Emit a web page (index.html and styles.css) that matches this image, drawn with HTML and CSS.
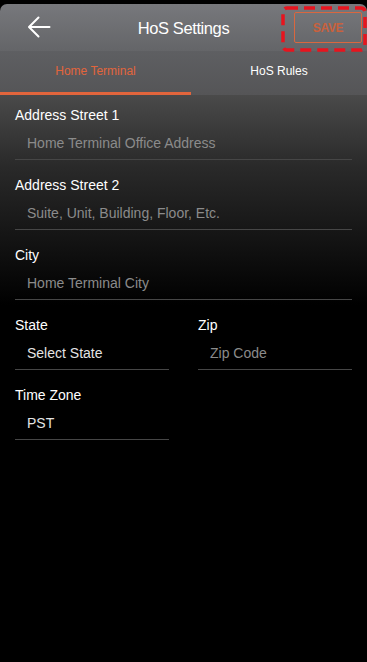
FILE: index.html
```html
<!DOCTYPE html>
<html>
<head>
<meta charset="utf-8">
<link rel="stylesheet" href="styles.css">
</head>
<body>
<div class="screen">
  <div class="top">
    <div class="navbar">
      <div class="back">
        <svg width="24" height="22" viewBox="0 0 24 22"><path d="M22.5 11H2.5M11.5 1.5L2 11l9.5 9.5" fill="none" stroke="#fff" stroke-width="2" stroke-linecap="round" stroke-linejoin="round"/></svg>
      </div>
      <div class="title">HoS Settings</div>
      <div class="save-wrap">
        <div class="save">SAVE</div>
        <svg class="highlight" width="86" height="46" viewBox="0 0 86 46"><rect x="2" y="2" width="82" height="42" rx="4" fill="none" stroke="#e8141e" stroke-width="3.5" stroke-dasharray="11 6"/></svg>
      </div>
    </div>
    <div class="tabs">
      <div class="tab active">Home Terminal</div>
      <div class="tab">HoS Rules</div>
    </div>
  </div>
  <div class="content">
    <div class="field">
      <div class="label">Address Street 1</div>
      <div class="input placeholder">Home Terminal Office Address</div>
    </div>
    <div class="field">
      <div class="label">Address Street 2</div>
      <div class="input placeholder">Suite, Unit, Building, Floor, Etc.</div>
    </div>
    <div class="field">
      <div class="label">City</div>
      <div class="input placeholder">Home Terminal City</div>
    </div>
    <div class="row">
      <div class="field">
        <div class="label">State</div>
        <div class="input value">Select State</div>
      </div>
      <div class="field">
        <div class="label">Zip</div>
        <div class="input placeholder">Zip Code</div>
      </div>
    </div>
    <div class="row">
      <div class="field">
        <div class="label">Time Zone</div>
        <div class="input value">PST</div>
      </div>
      <div class="spacer"></div>
    </div>
  </div>
</div>
</body>
</html>
```
FILE: styles.css
```css
* { box-sizing: border-box; }
html, body { margin: 0; padding: 0; background: #000; }
body { font-family: "Liberation Sans", Arial, Helvetica, sans-serif; }
.screen {
  width: 367px;
  height: 662px;
  background: #000;
  padding-top: 4px;
  overflow: hidden;
}
.top {
  border-radius: 7px 7px 0 0;
}
.navbar {
  height: 47px;
  border-radius: 7px 7px 0 0;
  background: linear-gradient(#77787c, #646568);
  display: flex;
  align-items: center;
  position: relative;
  z-index: 1;
}
.back {
  width: 78px;
  padding-left: 27px;
  display: flex;
  align-items: center;
  margin-top: -2px;
}
.back svg { display: block; }
.title {
  flex: 1;
  text-align: center;
  color: #fff;
  font-size: 16.5px;
  letter-spacing: -0.4px;
  padding-left: 8px;
  margin-top: 1px;
}
.save-wrap {
  width: 86px;
  height: 47px;
  position: relative;
  align-self: flex-start;
  padding-top: 8px;
  padding-left: 13px;
}
.save {
  width: 68px;
  height: 31px;
  border: 1.5px solid #d9673f;
  border-radius: 2px;
  color: #c9613d;
  font-size: 12px;
  font-weight: bold;
  letter-spacing: -0.3px;
  display: flex;
  align-items: center;
  justify-content: center;
}
.highlight {
  position: absolute;
  left: 0;
  top: 2px;
  display: block;
}
.tabs {
  height: 44px;
  background: linear-gradient(#5e5f62, #555557);
  display: flex;
}
.tab {
  flex: 1;
  display: flex;
  align-items: center;
  justify-content: center;
  color: #fff;
  font-size: 12px;
  padding-bottom: 2px;
  border-bottom: 3px solid transparent;
}
.tab.active {
  flex: 0 0 191px;
  color: #e2653c;
  border-bottom-color: #e2653c;
}
.content {
  height: 567px;
  background: linear-gradient(#4a4a4a 0px, #2a2a2a 70px, #151515 140px, #000 210px, #000 100%);
  padding: 11px 15px 0 15px;
}
.field {
  height: 70px;
}
.label {
  color: #fff;
  font-size: 14px;
  height: 18px;
  line-height: 18px;
}
.input {
  margin-top: 2px;
  height: 34px;
  border-bottom: 1px solid #464646;
  padding-left: 12px;
  font-size: 14px;
  display: flex;
  align-items: center;
  padding-top: 1px;
}
.placeholder { color: #8b8b8b; }
.value { color: #e4e4e4; }
.row {
  display: flex;
  gap: 29px;
}
.row .field { flex: 1; }
.row .spacer { flex: 1; }
```
